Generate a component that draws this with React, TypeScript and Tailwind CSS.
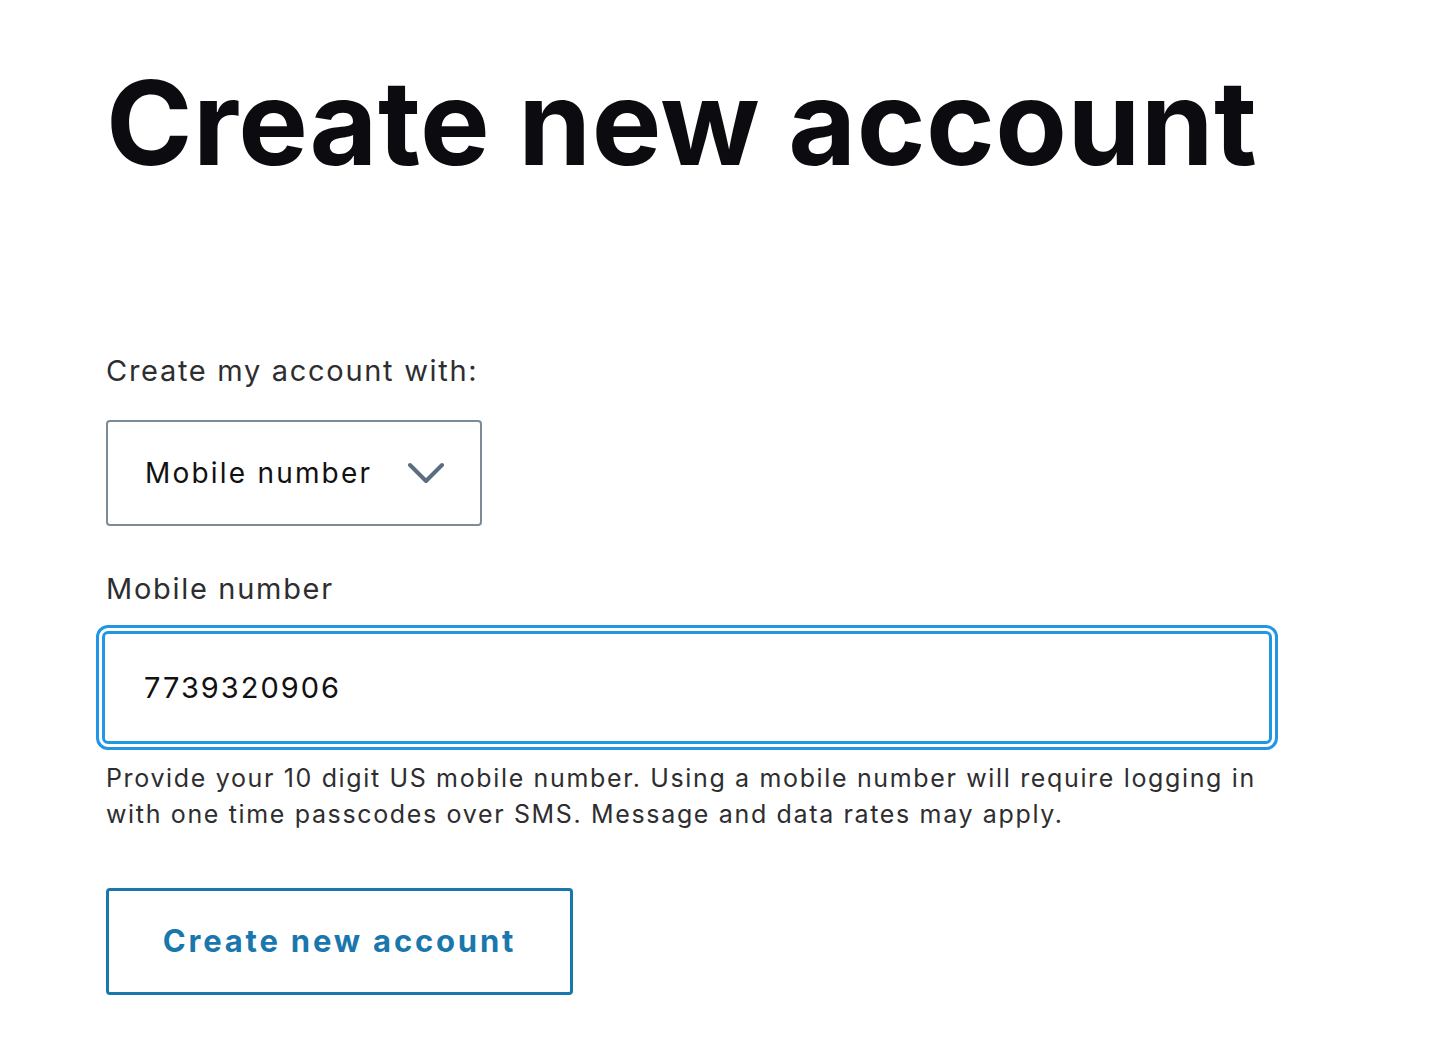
import React from "react";

export default function App() {
  return (
    <div className="min-h-[1062px] w-full bg-white font-['Inter',sans-serif]">
      <div className="pl-[106px] pt-[64px]">
        <h1 className="text-[117px] font-bold leading-none text-[#0c0b10] tracking-[0.45px]">
          Create new account
        </h1>
        <div className="mt-[172px] text-[29px] leading-[36px] tracking-[1.7px] text-[#2e2e30]">
          Create my account with:
        </div>
        <div className="mt-[31px] flex h-[106px] w-[376px] items-center justify-between rounded-[4px] border-2 border-[#7d8b99] pl-[37px] pr-[36px]">
          <span className="text-[28px] tracking-[2.2px] text-[#111]">Mobile number</span>
          <svg width="36" height="22" viewBox="0 0 36 22" fill="none">
            <path d="M2 3 L18 19 L34 3" stroke="#5b6d80" strokeWidth="4" strokeLinecap="round" strokeLinejoin="round" />
          </svg>
        </div>
        <div className="mt-[45px] text-[29px] leading-[36px] tracking-[1.7px] text-[#2e2e30]">
          Mobile number
        </div>
        <div className="-ml-[4px] mt-[24px] flex h-[113px] w-[1170px] items-center rounded-[6px] border-[3px] border-[#2196e5] pl-[39px] outline-[3px] outline-offset-[3px] outline-[#2196e5] outline-solid">
          <span className="text-[29px] tracking-[2px] text-[#111]">7739320906</span>
        </div>
        <div className="mt-[16px] w-[1180px] text-[25px] leading-[36px] tracking-[1.65px] text-[#2e2e30]">
          Provide your 10 digit US mobile number. Using a mobile number will require logging in with one time passcodes over SMS. Message and data rates may apply.
        </div>
        <button className="mt-[56px] flex h-[107px] w-[467px] items-center justify-center rounded-[4px] border-[3px] border-[#1a77ad] bg-white text-[31px] font-bold tracking-[2.8px] text-[#1a77ad]">
          Create new account
        </button>
      </div>
    </div>
  );
}
